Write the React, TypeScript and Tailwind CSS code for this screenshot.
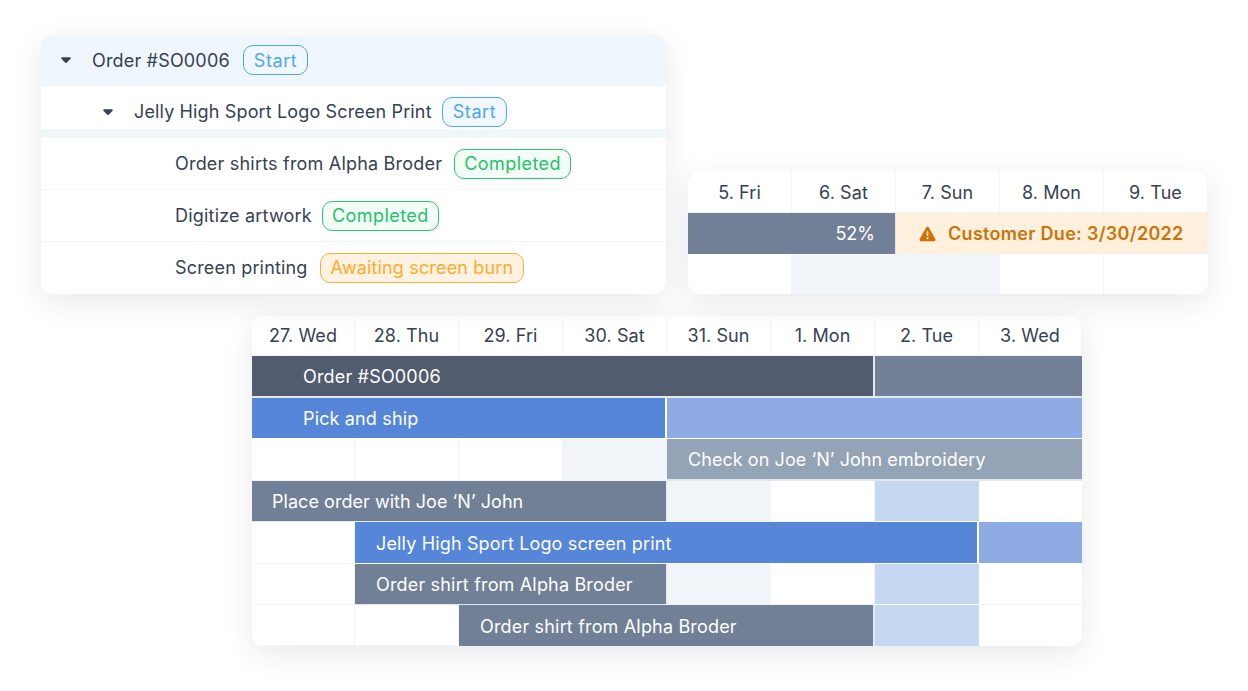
const shadow = "shadow-[0_8px_30px_rgba(30,41,59,0.1)]";

function Caret() {
  return (
    <svg width="12" height="8" viewBox="0 0 12 8" className="shrink-0">
      <path d="M2.100 1.200h7.800c.8 0 1.200.9.7 1.500L6.700 6.700c-.4.4-1 .4-1.400 0L1.400 2.700c-.5-.6-.1-1.500.7-1.500z" fill="#364152" />
    </svg>
  );
}

function Chip({ label, color, gap = "ml-3" }: { label: string; color: "blue" | "green" | "amber"; gap?: string }) {
  const styles = {
    blue: "px-[10px] border-[#4fa5f5] text-[#4fa5f5] bg-[#f1f7fe] tracking-[0.6px]",
    green: "px-[9px] border-[#2cc36f] text-[#22c468] bg-[#f3fcf6] tracking-[0.45px]",
    amber: "px-[10px] border-[#fbb034] text-[#fbac2a] bg-[#fff2e2] tracking-[0.15px]",
  };
  return (
    <span className={`${gap} h-[30px] flex items-center rounded-[10px] border ${styles[color]}`}>{label}</span>
  );
}

function TaskTree() {
  return (
    <div className={`w-[625px] h-[259px] rounded-xl bg-white overflow-hidden text-[18px] tracking-[0.17px] text-[#364152] ${shadow}`}>
      <div className="h-[51px] bg-[#f0f6fe] flex items-center pl-[19px] pb-[1px]">
        <Caret />
        <span className="ml-[20px]">Order #SO0006</span>
        <Chip label="Start" color="blue" gap="ml-[13px]" />
      </div>
      <div className="h-[52px] flex flex-col">
        <div className="h-[43px] flex items-center pl-[61px] pt-[8px]">
          <Caret />
          <span className="ml-[20px] tracking-[0.14px]">Jelly High Sport Logo Screen Print</span>
          <Chip label="Start" color="blue" gap="ml-[10px]" />
        </div>
        <div className="h-[9px] bg-[#f0f7f8]" />
      </div>
      <div className="h-[52px] flex items-center pl-[134px] border-b border-[#f1f5f9]">
        <span className="tracking-[0.2px]">Order shirts from Alpha Broder</span>
        <Chip label="Completed" color="green" />
      </div>
      <div className="h-[52px] flex items-center pl-[134px] border-b border-[#f1f5f9]">
        <span className="tracking-[0.2px]">Digitize artwork</span>
        <Chip label="Completed" color="green" gap="ml-[10px]" />
      </div>
      <div className="h-[52px] flex items-center pl-[134px] pb-[1px]">
        <span>Screen printing</span>
        <Chip label="Awaiting screen burn" color="amber" />
      </div>
    </div>
  );
}

function HeaderCell({ label }: { label: string }) {
  return (
    <div className="flex items-center justify-center border-r border-b border-[#f1f5f9] last:border-r-0 tracking-[0.08px] text-[#364152]">
      {label}
    </div>
  );
}

function DueCard() {
  const days = ["5. Fri", "6. Sat", "7. Sun", "8. Mon", "9. Tue"];
  return (
    <div className={`w-[520px] h-[122px] rounded-xl bg-white overflow-hidden text-[18px] grid grid-cols-5 grid-rows-[41px_41px_40px] ${shadow}`}>
      {days.map((d) => (
        <HeaderCell key={d} label={d} />
      ))}
      <div className="col-span-2 bg-[#718096] text-white flex items-center justify-end pr-[20px] border-r border-[#e2e8f0]">52%</div>
      <div className="col-span-3 bg-[#fef0dd] text-[#cc7408] font-semibold tracking-[0.3px] flex items-center pl-[23px]">
        <svg width="17" height="16" viewBox="0 0 18 16" className="shrink-0">
          <path d="M7.600 1.200c.6-1.100 2.200-1.100 2.800 0l6.900 12.200c.6 1.100-.2 2.400-1.400 2.400H2.100c-1.200 0-2-1.300-1.400-2.400z" fill="#cc7408" />
          <rect x="8.100" y="5" width="1.800" height="5.200" rx=".9" fill="#fef0dd" />
          <circle cx="9" cy="12.500" r="1.100" fill="#fef0dd" />
        </svg>
        <span className="ml-[12px]">Customer Due: 3/30/2022</span>
      </div>
      <div className="border-r border-[#f1f5f9]" />
      <div className="col-span-2 bg-[#f1f5fa]" />
      <div className="border-r border-[#f1f5f9]" />
      <div />
    </div>
  );
}

type Cell = { span?: number; bg: string; text?: string; pad?: string };

const W: Cell = { bg: "bg-white border-r border-b border-[#f1f5f9]" };
const PALE: Cell = { bg: "bg-[#f1f5fa]" };
const SKY: Cell = { bg: "bg-[#c6d7f1] border-b border-white" };

const rows: Cell[][] = [
  [
    { span: 6, bg: "bg-[#515c6f] border-r-2 border-b-2 border-[#e2e8f0] text-white", text: "Order #SO0006", pad: "pl-[51px] tracking-[0.17px]" },
    { span: 2, bg: "bg-[#718096] border-b-2 border-[#e2e8f0]" },
  ],
  [
    { span: 4, bg: "bg-[#5586d8] border-r-2 border-b border-white text-white", text: "Pick and ship", pad: "pl-[51px] tracking-[0.15px]" },
    { span: 4, bg: "bg-[#8eabe3] border-b border-white" },
  ],
  [
    W,
    W,
    W,
    PALE,
    { span: 4, bg: "bg-[#94a3b5] border-b-2 border-[#e2e8f0] text-white", text: "Check on Joe ‘N’ John embroidery", pad: "pl-[21px] tracking-[0.06px]" },
  ],
  [
    { span: 4, bg: "bg-[#718096] border-r border-b border-[#e2e8f0] text-white", text: "Place order with Joe ‘N’ John", pad: "pl-[20px] tracking-[0.04px]" },
    PALE,
    W,
    SKY,
    { bg: "bg-white" },
  ],
  [
    W,
    { span: 6, bg: "bg-[#5586d8] border-r-2 border-b border-white text-white", text: "Jelly High Sport Logo screen print", pad: "pl-[21px] pt-[1px] tracking-[0.15px]" },
    { bg: "bg-[#8eabe3] border-b border-white" },
  ],
  [
    W,
    { span: 3, bg: "bg-[#718096] border-r border-b border-[#e2e8f0] text-white", text: "Order shirt from Alpha Broder", pad: "pl-[21px] tracking-[0.17px]" },
    PALE,
    W,
    SKY,
    { bg: "bg-white border-b border-[#f1f5f9]" },
  ],
  [
    W,
    W,
    { span: 4, bg: "bg-[#718096] border-r-2 border-[#e2e8f0] text-white", text: "Order shirt from Alpha Broder", pad: "pl-[21px] pt-[1px] tracking-[0.17px]" },
    { bg: "bg-[#c6d7f1]" },
    { bg: "bg-white" },
  ],
];

const SPANS: Record<number, string> = {
  1: "col-span-1",
  2: "col-span-2",
  3: "col-span-3",
  4: "col-span-4",
  6: "col-span-6",
};

function GanttCard() {
  const days = ["27. Wed", "28. Thu", "29. Fri", "30. Sat", "31. Sun", "1. Mon", "2. Tue", "3. Wed"];
  return (
    <div className={`ml-[211px] mt-[22px] w-[830px] h-[330px] rounded-xl bg-white overflow-hidden text-[18px] grid grid-cols-[103px_repeat(6,104px)_103px] grid-rows-[40px_42px_41px_42px_41px_42px_41px_41px] ${shadow}`}>
      {days.map((d) => (
        <HeaderCell key={d} label={d} />
      ))}
      {rows.map((row, i) =>
        row.map((cell, j) => (
          <div key={`${i}-${j}`} className={`${SPANS[cell.span ?? 1]} ${cell.bg} ${cell.pad ?? ""} flex items-center`}>
            {cell.text}
          </div>
        )),
      )}
    </div>
  );
}

export default function App() {
  return (
    <div className="w-[1248px] h-[691px] bg-white overflow-hidden pt-[35px] pl-[41px] font-['Inter',sans-serif]">
      <div className="flex items-end gap-[22px]">
        <TaskTree />
        <DueCard />
      </div>
      <GanttCard />
    </div>
  );
}
